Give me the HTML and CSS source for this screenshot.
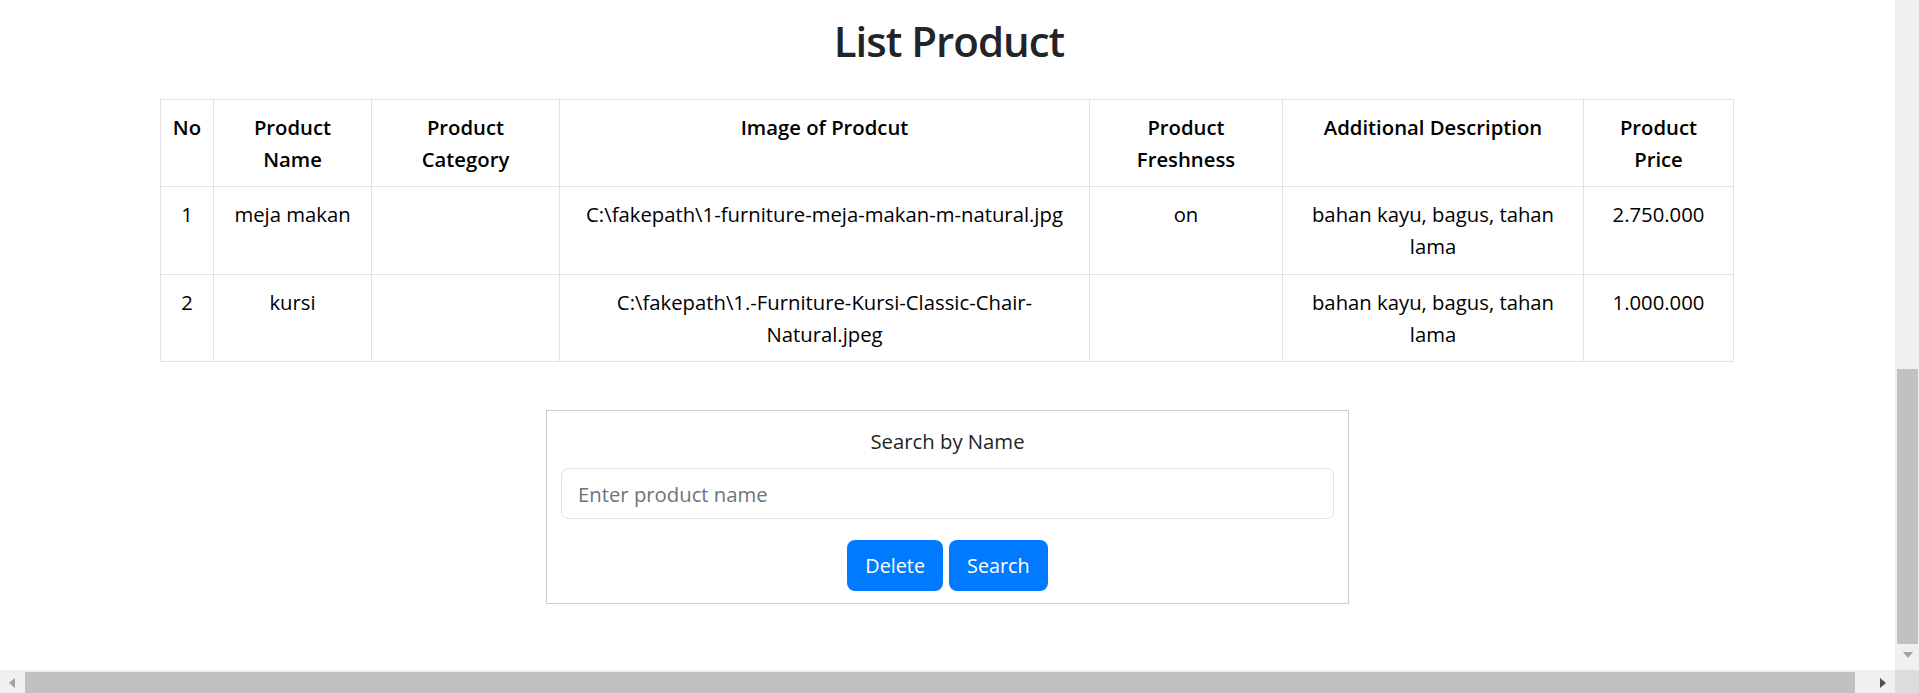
FILE: index.html
```html
<!DOCTYPE html>
<html lang="id">
<head>
<meta charset="utf-8">
<title>List Product</title>
<link rel="stylesheet" href="styles.css">
</head>
<body>
<div class="screen">
  <main class="page">
    <h1 class="title">List Product</h1>
    <table class="products">
      <colgroup>
        <col class="c-no"><col class="c-name"><col class="c-cat"><col class="c-img"><col class="c-fresh"><col class="c-desc"><col class="c-price">
      </colgroup>
      <thead>
        <tr>
          <th>No</th>
          <th>Product Name</th>
          <th>Product Category</th>
          <th>Image of Prodcut</th>
          <th>Product Freshness</th>
          <th>Additional Description</th>
          <th>Product Price</th>
        </tr>
      </thead>
      <tbody>
        <tr>
          <td>1</td>
          <td>meja makan</td>
          <td></td>
          <td>C:\fakepath\1-furniture-meja-makan-m-natural.jpg</td>
          <td>on</td>
          <td>bahan kayu, bagus, tahan lama</td>
          <td>2.750.000</td>
        </tr>
        <tr>
          <td>2</td>
          <td>kursi</td>
          <td></td>
          <td>C:\fakepath\1.-Furniture-Kursi-Classic-Chair-Natural.jpeg</td>
          <td></td>
          <td>bahan kayu, bagus, tahan lama</td>
          <td>1.000.000</td>
        </tr>
      </tbody>
    </table>

    <section class="search-box">
      <label class="search-label" for="productName">Search by Name</label>
      <input class="search-input" id="productName" type="text" placeholder="Enter product name">
      <div class="search-actions">
        <button class="btn" type="button">Delete</button>
        <button class="btn" type="button">Search</button>
      </div>
    </section>
  </main>

  <div class="vbar">
    <div class="vthumb"></div>
    <div class="vbtn"><span class="arrow-down"></span></div>
  </div>

  <div class="hbar">
    <div class="hbtn"><span class="arrow-left"></span></div>
    <div class="hthumb"></div>
    <div class="htrack"></div>
    <div class="hbtn"><span class="arrow-right"></span></div>
  </div>
  <div class="corner"></div>
</div>
</body>
</html>
```
FILE: styles.css
```css
* { box-sizing: border-box; }

html, body {
  margin: 0;
  padding: 0;
  height: 100%;
  overflow: hidden;
  background: #ffffff;
}

body {
  font-family: "Open Sans", "Noto Sans", sans-serif;
  font-size: 20.3px;
  color: #212529;
}

.screen {
  display: grid;
  grid-template-columns: 1fr 24px;
  grid-template-rows: 1fr 23px;
  width: 100vw;
  height: 100vh;
}

.page {
  overflow: hidden;
  padding-top: 16px;
  display: flex;
  flex-direction: column;
  align-items: center;
}

.title {
  margin: 0 0 33px;
  font-size: 42px;
  line-height: 50px;
  font-weight: 600;
  letter-spacing: -1px;
  color: #212529;
  padding-left: 3px;
}

/* table */
.products {
  width: 1573px;
  table-layout: fixed;
  border-collapse: collapse;
  color: #000;
  line-height: 32px;
  margin-left: -1px;
}

.c-no { width: 53px; }
.c-name { width: 158px; }
.c-cat { width: 188px; }
.c-img { width: 530px; }
.c-fresh { width: 193px; }
.c-desc { width: 301px; }
.c-price { width: 150px; }

.products th,
.products td {
  border: 1px solid #dee2e6;
  padding: 11px;
  text-align: center;
  vertical-align: top;
}

.products th {
  font-weight: 600;
}

.products tbody tr:first-child td {
  padding-bottom: 12px;
}

/* search */
.search-box {
  margin-top: 48px;
  width: 803px;
  border: 1px solid #cccccc;
  padding: 14px 14px 12px;
  display: flex;
  flex-direction: column;
  align-items: stretch;
}

.search-label {
  display: block;
  text-align: center;
  line-height: 32px;
  color: #212529;
}

.search-input {
  margin-top: 11px;
  height: 51px;
  padding: 0 16px;
  border: 1px solid #dfe2e6;
  border-radius: 7px;
  font-family: inherit;
  font-size: 20.3px;
  color: #495057;
  outline: none;
}

.search-input::placeholder {
  color: #6c757d;
  opacity: 1;
}

.search-actions {
  margin-top: 21px;
  display: flex;
  justify-content: center;
  gap: 6px;
}

.btn {
  height: 51px;
  padding: 0 18px;
  border: none;
  border-radius: 8px;
  background: #007bff;
  color: #ffffff;
  font-family: inherit;
  font-size: 19.8px;
  line-height: 1;
  cursor: pointer;
}

/* scrollbars */
.vbar {
  background: #f0f0f0;
  display: flex;
  flex-direction: column;
}

.vthumb {
  margin: 369px 1px 0 2px;
  height: 275px;
  background: #c1c1c1;
}

.vbtn {
  flex: 1;
  display: flex;
  align-items: center;
  justify-content: center;
  padding-left: 1px;
  padding-bottom: 4px;
}

.arrow-down {
  width: 0;
  height: 0;
  border-left: 5.5px solid transparent;
  border-right: 5.5px solid transparent;
  border-top: 6px solid #a3a3a3;
}

.hbar {
  background: #f0f0f0;
  display: flex;
  align-items: stretch;
  padding-top: 2px;
}

.hbtn {
  width: 24px;
  display: flex;
  align-items: center;
  justify-content: center;
}

.hbtn:first-child {
  width: 25px;
  justify-content: flex-start;
  padding-left: 9px;
}

.hthumb {
  width: 1830px;
  background: #c1c1c1;
}

.htrack {
  flex: 1;
}

.arrow-left {
  width: 0;
  height: 0;
  border-top: 5.5px solid transparent;
  border-bottom: 5.5px solid transparent;
  border-right: 6px solid #a3a3a3;
}

.arrow-right {
  width: 0;
  height: 0;
  border-top: 5.5px solid transparent;
  border-bottom: 5.5px solid transparent;
  border-left: 6px solid #505050;
}

.corner {
  background: #dcdcdc;
}
```
